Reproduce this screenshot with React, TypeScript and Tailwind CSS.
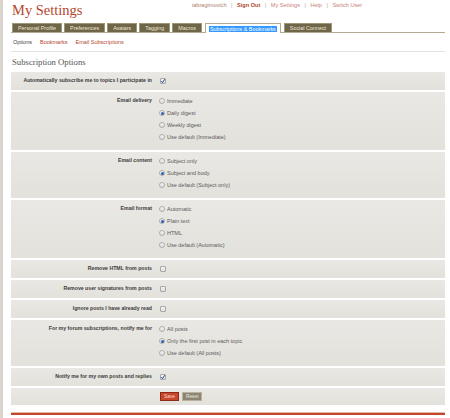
import React from 'react';

const sans = { fontFamily: '"Liberation Sans", Arial, sans-serif' };
const serif = { fontFamily: '"Liberation Serif", "DejaVu Serif", serif' };

const Checkbox = ({ checked }: { checked?: boolean }) => (
	<span className="relative inline-flex w-[6px] h-[6px] border border-[#a8a8a8] bg-gradient-to-b from-[#f4f4f4] to-[#dcdcdc] rounded-[1px] items-center justify-center">
		{checked && (
			<svg viewBox="0 0 6 6" className="absolute w-[6px] h-[6px]">
				<path d="M1.3 3.2 L2.5 4.6 L4.8 1.2" stroke="#2a4b9c" strokeWidth="1" fill="none" />
			</svg>
		)}
	</span>
);

const Radio = ({ checked }: { checked?: boolean }) => (
	<span className="inline-flex w-[6px] h-[6px] rounded-full border border-[#adadad] bg-gradient-to-b from-[#f6f6f6] to-[#dedede] items-center justify-center">
		{checked && <span className="w-[3px] h-[3px] rounded-full bg-[#2a63b5]" />}
	</span>
);

type Row =
	| { label: string; kind: 'check'; checked?: boolean }
	| { label: string; kind: 'radio'; options: string[]; selected: number };

const rows: Row[] = [
	{ label: 'Automatically subscribe me to topics I participate in', kind: 'check', checked: true },
	{ label: 'Email delivery', kind: 'radio', options: ['Immediate', 'Daily digest', 'Weekly digest', 'Use default (Immediate)'], selected: 1 },
	{ label: 'Email content', kind: 'radio', options: ['Subject only', 'Subject and body', 'Use default (Subject only)'], selected: 1 },
	{ label: 'Email format', kind: 'radio', options: ['Automatic', 'Plain text', 'HTML', 'Use default (Automatic)'], selected: 1 },
	{ label: 'Remove HTML from posts', kind: 'check' },
	{ label: 'Remove user signatures from posts', kind: 'check' },
	{ label: 'Ignore posts I have already read', kind: 'check' },
	{ label: 'For my forum subscriptions, notify me for', kind: 'radio', options: ['All posts', 'Only the first post in each topic', 'Use default (All posts)'], selected: 1 },
	{ label: 'Notify me for my own posts and replies', kind: 'check', checked: true },
];

const tabs = ['Personal Profile', 'Preferences', 'Avatars', 'Tagging', 'Macros'];

export default function App() {
	return (
		<div className="flex w-[450px] h-[418px] bg-white overflow-hidden" style={sans}>
			<div className="w-[3px] bg-[#d9d5cc] shrink-0" />
			<div className="flex-1 pl-[8px] pr-[5px]">
				{/* header */}
				<div className="flex items-start h-[22px]">
					<h1 className="w-[181px] pl-[1px] text-[14.5px] leading-[20px] text-[#b5462c]" style={serif}>My Settings</h1>
					<div className="flex items-center gap-[4.5px] mt-[2px] text-[5.6px] leading-[6px] text-[#c8837a]">
						<span className="text-[#b07a70]">iabragimovich</span>
						<span className="text-[#c0a098]">|</span>
						<span className="font-bold text-[#b5462c]">Sign Out</span>
						<span className="text-[#c0a098]">|</span>
						<span>My Settings</span>
						<span className="text-[#c0a098]">|</span>
						<span>Help</span>
						<span className="text-[#c0a098]">|</span>
						<span>Switch User</span>
					</div>
				</div>

				{/* tabs */}
				<div className="flex items-end gap-[2px] pl-[1px] border-b border-[#b3aa94] h-[11px]">
					{tabs.map(t => (
						<div key={t} className="h-[9px] px-[5px] flex items-center bg-[#6f6548] border border-[#9e9679] border-b-0 text-[5.4px] text-[#ece6d4] whitespace-nowrap">
							{t}
						</div>
					))}
					<div className="h-[10px] px-[3px] flex items-center bg-white border border-[#b3aa94] border-b-0 -mb-[1px] ml-[1px]">
						<span className="bg-[#3399ff] text-white text-[5.4px] leading-[6px] px-[1px] whitespace-nowrap">Subscriptions &amp; Bookmarks</span>
					</div>
					<div className="h-[9px] px-[5px] ml-[1px] flex items-center bg-[#6f6548] border border-[#9e9679] border-b-0 text-[5.4px] text-[#ece6d4] whitespace-nowrap">
						Social Connect
					</div>
				</div>

				{/* sub nav */}
				<div className="flex items-center gap-[8px] pl-[2px] h-[19px] border-b border-[#e2e2e2] text-[5.5px]">
					<span className="text-[#444]">Options</span>
					<span className="text-[#b5462c]">Bookmarks</span>
					<span className="text-[#b5462c]">Email Subscriptions</span>
				</div>

				<h2 className="pl-[1px] mt-[5px] h-[15px] text-[8.7px] leading-[10px] text-[#555]" style={serif}>Subscription Options</h2>

				{/* form */}
				<div className="flex flex-col gap-[2px]">
					{rows.map(r => (
						<div
							key={r.label}
							className={`grid grid-cols-[147px_1fr] bg-gradient-to-b from-[#eae8e4] to-[#e3e1db] ${r.kind === 'radio' ? 'pt-[3px] pb-[7px]' : 'py-[3px]'}`}
						>
							<div className="h-[12px] flex items-center justify-end pr-[6px] text-[5.2px] font-bold text-[#3a3a3a] whitespace-nowrap">
								{r.label}
							</div>
							<div className="flex flex-col pl-[1px]">
								{r.kind === 'check' ? (
									<div className="h-[12px] flex items-center pl-[1px]">
										<Checkbox checked={r.checked} />
									</div>
								) : (
									r.options.map((o, i) => (
										<div key={o} className="h-[12px] flex items-center gap-[2px] text-[5.5px] text-[#5a5a5a] whitespace-nowrap">
											<Radio checked={i === r.selected} />
											<span>{o}</span>
										</div>
									))
								)}
							</div>
						</div>
					))}
					<div className="grid grid-cols-[147px_1fr] bg-gradient-to-b from-[#eae8e4] to-[#e3e1db] h-[17px]">
						<div />
						<div className="flex items-center gap-[3px] pl-[2px]">
							<button className="h-[9px] px-[3px] bg-[#c8472b] border border-[#8f2a15] text-[4.8px] text-[#f6dcd5] flex items-center">Save</button>
							<button className="h-[9px] px-[3px] bg-[#8b8571] border border-[#b7b1a0] text-[4.8px] text-[#ecebe4] flex items-center">Reset</button>
						</div>
					</div>
				</div>

				<div className="mt-[7px] border-t border-[#e8b8a8]" />
				<div className="border-t-2 border-[#c2482c]" />
			</div>
		</div>
	);
}
